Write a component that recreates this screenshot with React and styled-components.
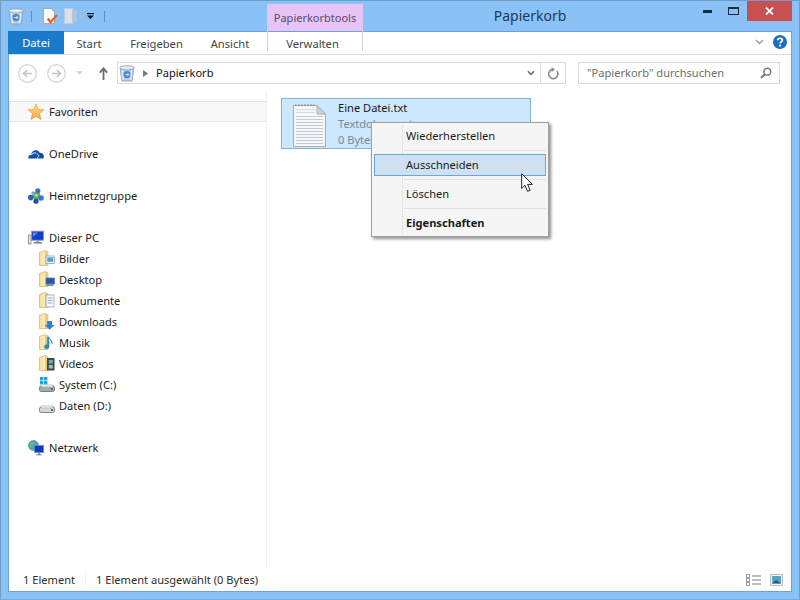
import React from "react";
import styled, { createGlobalStyle } from "styled-components";

const Global = createGlobalStyle`
  html, body { margin: 0; padding: 0; width: 800px; height: 600px; overflow: hidden; background: #8cc3f6; }
  * { box-sizing: border-box; }
`;

const FONT = `"Noto Sans", "Open Sans", "Liberation Sans", sans-serif`;

const Win = styled.div`
  position: relative;
  width: 800px;
  height: 600px;
  background: #8ac2f7;
  border: 1px solid #6f9cc8;
  border-bottom-color: #7eb0df;
  font-family: ${FONT};
  font-size: 11.1px;
  color: #1e1e1e;
  display: flex;
  flex-direction: column;
  overflow: hidden;
`;
const Spacer = styled.span`
  width: ${(p) => p.$w}px;
  flex: none;
`;

/* ---------- title bar ---------- */
const TitleBar = styled.div`
  height: 30px;
  flex: none;
  display: flex;
  align-items: flex-start;
  padding-left: 7px;
`;
const Qat = styled.div`
  display: flex;
  align-items: center;
  height: 30px;
  width: 259px;
  flex: none;
`;
const QatSep = styled.span`
  width: 1px;
  height: 11px;
  background: #5f8fb8;
  margin: 0 ${(p) => p.$r || 0}px 0 ${(p) => p.$l || 0}px;
`;
const ContextTab = styled.div`
  width: 96px;
  height: 27px;
  margin-top: 3px;
  flex: none;
  background: #e6c5f6;
  color: #5c4a6b;
  font-size: 11px;
  display: flex;
  align-items: center;
  justify-content: center;
`;
const Title = styled.div`
  flex: 1;
  text-align: center;
  font-size: 14px;
  line-height: 30px;
  color: #1f3a57;
  padding-left: 3px;
`;
const WinBtns = styled.div`
  display: flex;
  align-items: flex-start;
  margin-right: 7px;
`;
const WinBtn = styled.div`
  width: ${(p) => p.$w}px;
  height: 20px;
  display: flex;
  align-items: center;
  justify-content: center;
  background: ${(p) => p.$bg || "transparent"};
  color: #fff;
`;

/* ---------- client area ---------- */
const Client = styled.div`
  flex: 1;
  margin: 0 7px 7px;
  background: #fff;
  display: flex;
  flex-direction: column;
  min-height: 0;
  box-shadow: 0 0 0 1px #6fa3d6 inset;
  padding: 0 1px 1px;
`;
const Ribbon = styled.div`
  height: 24px;
  flex: none;
  display: flex;
  border-bottom: 1px solid #dadbdc;
`;
const FileTab = styled.div`
  width: 56px;
  height: 23px;
  margin-left: -1px;
  background: #1979ca;
  color: #fff;
  display: flex;
  align-items: center;
  justify-content: center;
  font-size: 11.2px;
`;
const RTab = styled.div`
  width: ${(p) => p.$w}px;
  flex: none;
  height: 20px;
  margin-top: 0;
  padding-top: 4px;
  margin-right: ${(p) => p.$mr || 0}px;
  display: flex;
  align-items: center;
  justify-content: center;
  color: #444;
  font-size: 11.2px;
  padding-right: ${(p) => (p.$framed ? 5 : 0)}px;
  border-left: ${(p) => (p.$framed ? "1px solid #d3d3d3" : "none")};
  border-right: ${(p) => (p.$framed ? "1px solid #d3d3d3" : "none")};
`;
const RibbonEnd = styled.div`
  margin-left: auto;
  display: flex;
  align-items: center;
  gap: 9px;
  padding: 0 4px 2px 0;
`;
const AddrRow = styled.div`
  height: 36px;
  flex: none;
  display: flex;
  align-items: center;
  padding: 0 11px 0 9px;
`;
const NavGroup = styled.div`
  display: flex;
  align-items: center;
  width: 99px;
  flex: none;
`;
const AddrBox = styled.div`
  width: 449px;
  height: 22px;
  border: 1px solid #d9d9d9;
  display: flex;
  align-items: center;
  padding-left: 1px;
  color: #111;
`;
const BoxLabel = styled.span`
  margin-bottom: 2px;
`;
const DropCell = styled.span`
  margin-left: auto;
  margin-right: 5px;
  display: flex;
`;
const RefreshCell = styled.div`
  width: 25px;
  align-self: stretch;
  border-left: 1px solid #d9d9d9;
  display: flex;
  align-items: center;
  justify-content: center;
`;
const SearchBox = styled.div`
  margin-left: auto;
  width: 202px;
  height: 22px;
  border: 1px solid #d9d9d9;
  display: flex;
  align-items: center;
  justify-content: space-between;
  padding: 0 7px 0 8px;
  color: #6d6d6d;
`;
const Body = styled.div`
  flex: 1;
  display: flex;
  min-height: 0;
`;
const Nav = styled.div`
  width: 258px;
  flex: none;
  border-right: 1px solid #f1f1f1;
  padding-top: 10px;
`;
const NavHead = styled.div`
  height: 21px;
  display: flex;
  align-items: center;
  gap: 5px;
  padding-left: 19px;
  margin-bottom: ${(p) => p.$mb}px;
  color: #1c1c1c;
  ${(p) => p.$sel && "background:#f8f8f8;border:1px solid #e2e2e2;border-right:none;border-left:1px solid #e6e6e6;padding-left:18px;"}
`;
const NavItem = styled.div`
  height: 21px;
  display: flex;
  align-items: center;
  gap: 4px;
  padding-left: 30px;
  color: #1c1c1c;
  margin-bottom: ${(p) => p.$mb || 0}px;
`;
const Content = styled.div`
  flex: 1;
  padding: 7px 0 0 14px;
`;
const FileCard = styled.div`
  width: 250px;
  height: 51px;
  background: #cce8ff;
  border: 1px solid #7fb5e0;
  display: flex;
  padding-left: 11px;
`;
const FileIconBox = styled.div`
  width: 45px;
  flex: none;
  padding-top: 5px;
`;
const FileText = styled.div`
  display: flex;
  flex-direction: column;
  line-height: 16px;
  margin-top: 1px;
`;
const FileName = styled.div`
  color: #1a1a1a;
`;
const FileMeta = styled.div`
  color: #7a8794;
`;
const StatusBar = styled.div`
  height: 23px;
  flex: none;
  display: flex;
  align-items: center;
  padding: 0 8px 0 14px;
  color: #2d2d2d;
`;
const StatusSep = styled.span`
  width: 1px;
  height: 13px;
  background: #efefef;
  margin: 0 10px;
`;
const ViewBtns = styled.div`
  margin-left: auto;
  display: flex;
  align-items: center;
  gap: 9px;
`;

/* ---------- overlay: context menu and pointer ---------- */
const Menu = styled.div`
  position: absolute;
  left: 370px;
  top: 121px;
  width: 178px;
  height: 115px;
  background: #f5f5f5;
  border: 1px solid #a0a0a0;
  box-shadow: 2px 2px 3px rgba(0, 0, 0, 0.45);
  padding: 2px;
  display: flex;
  flex-direction: column;
`;
const MenuGutter = styled.div`
  position: absolute;
  left: 30px;
  top: 2px;
  bottom: 2px;
  width: 1px;
  background: #e4e4e4;
`;
const MenuItem = styled.div`
  position: relative;
  height: 22px;
  display: flex;
  align-items: center;
  padding-left: 32px;
  padding-bottom: 2px;
  color: #1b1b1b;
  font-weight: ${(p) => (p.$bold ? 700 : 400)};
  ${(p) => p.$active && "background:#cfe0f0;border:1px solid #6ea5d8;padding-left:31px;"}
`;
const MenuLine = styled.div`
  position: relative;
  height: 7px;
  margin-left: 30px;
  display: flex;
  align-items: center;
  &::before { content: ""; flex: 1; height: 1px; background: #e0e0e0; }
`;
const Cursor = styled.svg`
  position: absolute;
  left: 520px;
  top: 172px;
`;
const CrumbSvg = styled.svg`
  margin: 0 8px 0 8px;
  flex: none;
`;

/* ---------- icons ---------- */
const Bin = () => (
  <svg width="16" height="17" viewBox="0 0 16 17">
    <path d="M1.2 3 L14.8 3 L13.2 16 L2.8 16 Z" fill="#bcd0e2" stroke="#8ba0b5" strokeWidth=".8" />
    <ellipse cx="8" cy="2.8" rx="7.2" ry="2.1" fill="#e4ecf3" stroke="#8ba0b5" strokeWidth=".8" />
    <circle cx="8" cy="9.6" r="3.6" fill="#3f88d8" />
    <path d="M6.3 9.6 L9.7 9.6 M8.3 8 L9.9 9.6 L8.3 11.2" stroke="#fff" strokeWidth=".8" fill="none" />
    <path d="M3.4 5.4 L4.3 15 M12.6 5.4 L11.7 15" stroke="#eef3f8" strokeWidth="1" />
  </svg>
);
const NoteCheck = () => (
  <svg width="16" height="17" viewBox="0 0 16 17">
    <path d="M1.5 .5 H9 L12.5 4 V15.5 H1.5 Z" fill="#fafafa" stroke="#a8a8a8" />
    <path d="M5.8 10.5 L8.6 14.2 L15 7" stroke="#e8602c" strokeWidth="2.3" fill="none" />
  </svg>
);
const Panes = () => (
  <svg width="13" height="16" viewBox="0 0 13 16">
    <rect x=".5" y=".5" width="8" height="15" fill="#d8e2ec" stroke="#c2ccd6" />
    <rect x="8" y="1.5" width="4.5" height="13" fill="#b6c6d6" />
  </svg>
);
const QatArrow = () => (
  <svg width="7" height="6" viewBox="0 0 7 6">
    <rect x="0" y="0" width="7" height="1.2" fill="#111" />
    <path d="M0 2.5 H7 L3.5 6 Z" fill="#111" />
  </svg>
);
const CircleNav = ({ flip }) => (
  <svg width="19" height="19" viewBox="0 0 19 19">
    <circle cx="9.5" cy="9.5" r="8.8" fill="#fff" stroke="#d3d3d3" strokeWidth="1.2" />
    <path d={flip ? "M5 9.5 H13 M9.8 6 L13.5 9.5 L9.8 13" : "M14 9.5 H6 M9.2 6 L5.5 9.5 L9.2 13"} stroke="#c4c4c4" strokeWidth="1.6" fill="none" />
  </svg>
);
const SmallCaret = ({ c = "#c8c8c8", w = 7, h = 4 }) => (
  <svg width={w} height={h} viewBox="0 0 7 4"><path d="M0 0 H7 L3.5 4 Z" fill={c} /></svg>
);
const UpArrow = () => (
  <svg width="9" height="13" viewBox="0 0 9 13">
    <path d="M4.5 13 V2 M.8 5.6 L4.5 1.4 L8.2 5.6" stroke="#6b6b6b" strokeWidth="1.8" fill="none" />
  </svg>
);
const Crumb = () => (
  <CrumbSvg width="5" height="7" viewBox="0 0 5 7">
    <path d="M0 0 L5 3.5 L0 7 Z" fill="#777" />
  </CrumbSvg>
);
const Chevron = ({ c = "#707070", w = 9 }) => (
  <svg width={w} height="6" viewBox="0 0 9 6"><path d="M1 1 L4.5 4.5 L8 1" stroke={c} strokeWidth="1.7" fill="none" /></svg>
);
const Refresh = () => (
  <svg width="12" height="13" viewBox="0 0 12 13">
    <path d="M9.8 4 A4.6 4.6 0 1 1 5 2.6" stroke="#8a8a8a" strokeWidth="1.6" fill="none" />
    <path d="M4.6 0 L8 2.6 L4.6 5 Z" fill="#8a8a8a" />
  </svg>
);
const Search = () => (
  <svg width="12" height="12" viewBox="0 0 12 12">
    <circle cx="7.3" cy="4.7" r="3.4" stroke="#7a7a7a" strokeWidth="1.5" fill="none" />
    <path d="M4.8 7.2 L1 11" stroke="#7a7a7a" strokeWidth="2" />
  </svg>
);
const Help = () => (
  <svg width="14" height="14" viewBox="0 0 14 14">
    <circle cx="7" cy="7" r="7" fill="#1b6fc2" />
    <path d="M4.7 5.2 C4.9 2.6 9.4 2.6 9.4 5.1 C9.4 6.8 7.1 6.6 7.1 8.6" stroke="#fff" strokeWidth="1.7" fill="none" />
    <rect x="6.2" y="9.7" width="1.8" height="1.8" fill="#fff" />
  </svg>
);
const Star = () => (
  <svg width="16" height="16" viewBox="0 0 16 16">
    <defs>
      <linearGradient id="st" x1="0" y1="0" x2="0" y2="1">
        <stop offset="0" stopColor="#ffe08a" /><stop offset="1" stopColor="#f5a73c" />
      </linearGradient>
    </defs>
    <path d="M8 .2 L10.2 5.4 L15.9 5.8 L11.5 9.5 L12.9 15.4 L8 12.2 L3.1 15.4 L4.5 9.5 L.1 5.8 L5.8 5.4 Z" fill="url(#st)" stroke="#d99a3a" strokeWidth=".7" />
  </svg>
);
const Cloud = () => (
  <svg width="16" height="16" viewBox="0 0 16 16">
    <path d="M.3 12 C.3 9.6 1.6 8.7 3 8.7 C3.4 6 5.5 4.2 7.8 4.2 C9.6 4.2 11 5.2 11.6 6.8 C13.8 6.6 15.9 8.4 15.9 10.5 C15.9 11.4 15.6 12 15.2 12.6 L1 12.6 C.5 12.6 .3 12.4 .3 12 Z" fill="#0d4ea6" />
    <path d="M3.4 9.2 C4 7.4 6 6.4 8 7" stroke="#fff" strokeWidth="1" fill="none" />
    <path d="M8.6 7.4 L11 9.5 L9 12.4" stroke="#fff" strokeWidth=".8" fill="none" />
  </svg>
);
const Homegroup = () => (
  <svg width="16" height="16" viewBox="0 0 16 16">
    <circle cx="8.5" cy="7.5" r="3.8" fill="#66b04a" />
    <circle cx="9.8" cy="2.8" r="2.6" fill="#3f6fc2" />
    <circle cx="2.8" cy="9.6" r="2.8" fill="#2f5fb4" />
    <circle cx="13" cy="10" r="2.8" fill="#3f78cc" />
    <circle cx="8" cy="13.2" r="2.6" fill="#2a4f9e" />
    <circle cx="5" cy="5" r="1.7" fill="#7fa6dc" />
    <circle cx="8.4" cy="7.4" r="1.2" fill="#d6ecc4" />
  </svg>
);
const Pc = () => (
  <svg width="16" height="16" viewBox="0 0 16 16">
    <rect x=".5" y="5" width="2.5" height="9" fill="#e8e8e8" stroke="#777" strokeWidth=".7" />
    <rect x="3.7" y="1.2" width="11.8" height="9" fill="#0f3fd0" stroke="#8a96a6" strokeWidth=".9" />
    <path d="M5 2.5 H10 L5 7 Z" fill="#5e8cf0" />
    <rect x="8" y="10.4" width="3.4" height="1.6" fill="#9aa4ae" />
    <rect x="5.5" y="12" width="8.5" height="1.6" fill="#7d8893" />
  </svg>
);
const Folder = ({ children }) => (
  <svg width="16" height="17" viewBox="0 0 16 17">
    <defs>
      <linearGradient id="fo" x1="0" y1="0" x2="1" y2="0">
        <stop offset="0" stopColor="#f6df9a" /><stop offset=".7" stopColor="#fbecb8" /><stop offset="1" stopColor="#e2c478" />
      </linearGradient>
    </defs>
    <path d="M.5 2.5 L6 .5 L8.5 1.5 V15.5 L.5 15.5 Z" fill="url(#fo)" stroke="#d1b16a" strokeWidth=".7" />
    <rect x="6" y="1.6" width="3.4" height="14" fill="#e7cb83" />
    {children}
  </svg>
);
const Drive = ({ win }) => (
  <svg width="16" height="16" viewBox="0 0 16 16">
    {win && (
      <g fill="#1fa2e0">
        <rect x="1" y="0" width="3.4" height="3.4" /><rect x="5" y="0" width="3.4" height="3.4" />
        <rect x="1" y="4" width="3.4" height="3.4" /><rect x="5" y="4" width="3.4" height="3.4" />
      </g>
    )}
    <rect x=".5" y="9" width="15" height="5.5" rx="1.8" fill={win ? "#9eaeb4" : "#d8d8d8"} stroke="#6b6b6b" strokeWidth=".8" />
    <rect x="2" y="7.8" width="12" height="2.2" rx="1" fill="#eef0f0" stroke="#9a9a9a" strokeWidth=".5" />
    <rect x="12" y="11" width="2" height="2" fill="#666" />
  </svg>
);
const Network = () => (
  <svg width="16" height="16" viewBox="0 0 16 16">
    <circle cx="5.5" cy="5.5" r="5" fill="#3fa8d8" stroke="#2c86b4" strokeWidth=".6" />
    <path d="M2 3 Q4.5 1 6 3 Q7 5 4 6 Q3 8 1.5 6 Z" fill="#6cc04a" />
    <rect x="6.5" y="5.5" width="9" height="7" fill="#1038c8" stroke="#7d8a9a" strokeWidth=".8" />
    <rect x="10" y="12.5" width="2" height="1.6" fill="#88929c" />
    <rect x="8.5" y="14" width="5" height="1.4" fill="#88929c" />
  </svg>
);
const TextFile = () => (
  <svg width="33" height="43" viewBox="0 0 33 43">
    <path d="M.5 1.5 H24 L32.5 10 V42.5 H.5 Z" fill="#f6f7f9" stroke="#a9adb2" />
    <path d="M24 1.5 V10 H32.5 Z" fill="#cfd4da" stroke="#a9adb2" />
    <path d="M2 1.3 H23" stroke="#8a8e92" strokeWidth="1.4" strokeDasharray="1.6 1.4" />
    {[12, 15, 18, 21, 24, 27, 30, 33, 36, 39].map((y) => (
      <path key={y} d={`M3 ${y}.5 H30`} stroke="#c3ccd6" />
    ))}
    {[5, 8].map((y) => (
      <path key={y} d={`M3 ${y}.5 H22`} stroke="#d6dbe1" />
    ))}
  </svg>
);
const ListView = () => (
  <svg width="15" height="12" viewBox="0 0 15 12">
    {[0, 4, 8].map((y) => (
      <g key={y}>
        <rect x=".5" y={y + 0.5} width="3" height="3" fill="#fff" stroke="#7c8a98" strokeWidth=".8" />
        <path d={`M6 ${y + 2} H15`} stroke="#6e7a86" strokeWidth="1" />
      </g>
    ))}
  </svg>
);
const ThumbView = () => (
  <svg width="13" height="12" viewBox="0 0 13 12">
    <rect x=".5" y=".5" width="12" height="11" fill="#f6f6f6" stroke="#b8bec4" />
    <rect x="2" y="2" width="9" height="7.5" fill="#58a4c8" />
    <path d="M2 9.5 L6 6 L11 9.5 Z" fill="#37566a" />
  </svg>
);

const folderBadges = {
  Bilder: <g><rect x="7" y="6" width="8.5" height="7.5" fill="#f4f8fb" stroke="#7f98ae" strokeWidth=".7" /><rect x="8.3" y="7.3" width="6" height="4.6" fill="#58a7c7" /></g>,
  Desktop: <g><rect x="7" y="7" width="8.5" height="6" fill="#2158b8" stroke="#66788a" strokeWidth=".7" /><rect x="7.5" y="13.4" width="7" height="1.5" fill="#707c88" /></g>,
  Dokumente: <g><rect x="7" y="3" width="8" height="12" fill="#f7f9fb" stroke="#8b98a6" strokeWidth=".7" /><path d="M8.5 6 H13.5 M8.5 8.5 H13.5 M8.5 11 H13.5" stroke="#7f9ab2" strokeWidth=".8" /></g>,
  Downloads: <path d="M8.2 8 H13 V12 H15.6 L10.6 16.8 L5.6 12 H8.2 Z" fill="#2f7fd2" />,
  Musik: <path d="M10 3 V12.5 A2.3 2 0 1 1 8.4 10.8 V3 Z M10 3 C11 6 14 6 13 10" fill="#2f8ac4" stroke="#2f8ac4" strokeWidth=".6" />,
  Videos: <g><rect x="8" y="3" width="7.5" height="12.5" fill="#3a4a52" /><rect x="9.8" y="5" width="4" height="3.5" fill="#76a8b4" /><rect x="9.8" y="10" width="4" height="3.5" fill="#a5c0a8" /></g>,
};
const places = ["Bilder", "Desktop", "Dokumente", "Downloads", "Musik", "Videos"];

export default function App() {
  return (
    <Win>
      <Global />
      <TitleBar>
        <Qat>
          <Bin />
          <QatSep $l={7} $r={10} />
          <NoteCheck />
          <Spacer $w={6} />
          <Panes />
          <Spacer $w={10} />
          <QatArrow />
          <QatSep $l={10} />
        </Qat>
        <ContextTab>Papierkorbtools</ContextTab>
        <Title>Papierkorb</Title>
        <WinBtns>
          <WinBtn $w={26}><svg width="9" height="3"><rect width="9" height="3" fill="#1c2d40" /></svg></WinBtn>
          <WinBtn $w={27}><svg width="11" height="8"><rect x=".5" y=".5" width="10" height="7" fill="none" stroke="#1c2d40" /><rect width="11" height="2" fill="#1c2d40" /></svg></WinBtn>
          <WinBtn $w={45} $bg="#c75050"><svg width="9" height="8" viewBox="0 0 9 8"><path d="M1 .5 L8 7.5 M8 .5 L1 7.5" stroke="#fff" strokeWidth="1.8" /></svg></WinBtn>
        </WinBtns>
      </TitleBar>
      <Client>
        <Ribbon>
          <FileTab>Datei</FileTab>
          <RTab $w={50}>Start</RTab>
          <RTab $w={85}>Freigeben</RTab>
          <RTab $w={62} $mr={6}>Ansicht</RTab>
          <RTab $w={96} $framed>Verwalten</RTab>
          <RibbonEnd>
            <Chevron c="#a5a5a5" />
            <Help />
          </RibbonEnd>
        </Ribbon>
        <AddrRow>
          <NavGroup>
            <CircleNav />
            <Spacer $w={10} />
            <CircleNav flip />
            <Spacer $w={10} />
            <SmallCaret c="#d8d8d8" />
            <Spacer $w={16} />
            <UpArrow />
          </NavGroup>
          <AddrBox>
            <Bin />
            <Crumb />
            <BoxLabel>Papierkorb</BoxLabel>
            <DropCell><Chevron c="#6a6a6a" w={8} /></DropCell>
            <RefreshCell><Refresh /></RefreshCell>
          </AddrBox>
          <SearchBox>
            <BoxLabel>"Papierkorb" durchsuchen</BoxLabel>
            <Search />
          </SearchBox>
        </AddrRow>
        <Body>
          <Nav>
            <NavHead $sel $mb={21}><Star />Favoriten</NavHead>
            <NavHead $mb={21}><Cloud />OneDrive</NavHead>
            <NavHead $mb={21}><Homegroup />Heimnetzgruppe</NavHead>
            <NavHead $mb={0}><Pc />Dieser PC</NavHead>
            {places.map((p) => (
              <NavItem key={p}><Folder>{folderBadges[p]}</Folder>{p}</NavItem>
            ))}
            <NavItem><Drive win />System (C:)</NavItem>
            <NavItem $mb={21}><Drive />Daten (D:)</NavItem>
            <NavHead $mb={0}><Network />Netzwerk</NavHead>
          </Nav>
          <Content>
            <FileCard>
              <FileIconBox><TextFile /></FileIconBox>
              <FileText>
                <FileName>Eine Datei.txt</FileName>
                <FileMeta>Textdokument</FileMeta>
                <FileMeta>0 Bytes</FileMeta>
              </FileText>
            </FileCard>
          </Content>
        </Body>
        <StatusBar>
          <span>1 Element</span>
          <StatusSep />
          <span>1 Element ausgewählt (0 Bytes)</span>
          <ViewBtns><ListView /><ThumbView /></ViewBtns>
        </StatusBar>
      </Client>
      <Menu>
        <MenuGutter />
        <MenuItem>Wiederherstellen</MenuItem>
        <MenuLine />
        <MenuItem $active>Ausschneiden</MenuItem>
        <MenuLine />
        <MenuItem>Löschen</MenuItem>
        <MenuLine />
        <MenuItem $bold>Eigenschaften</MenuItem>
      </Menu>
      <Cursor width="13" height="20" viewBox="0 0 13 20">
        <path d="M.7 .7 V15.5 L4 12.3 L6.6 18.4 L9.2 17.3 L6.6 11.4 L11.4 11.4 Z" fill="#fff" stroke="#222" strokeWidth="1" strokeLinejoin="round" />
      </Cursor>
    </Win>
  );
}
